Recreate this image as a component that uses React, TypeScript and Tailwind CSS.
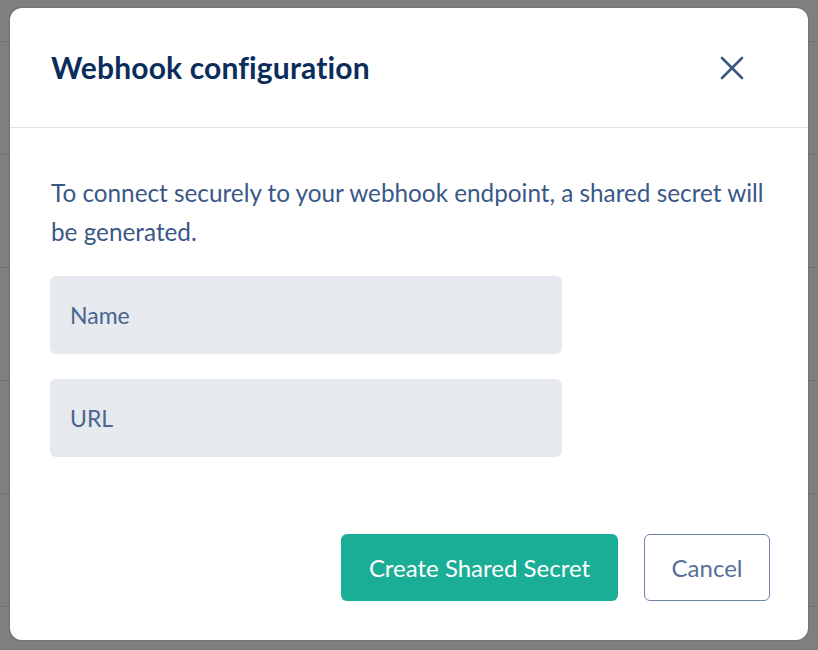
const rows = [42, 113, 113, 113, 113, 113]

export default function App() {
  return (
    <div
      className="relative w-[818px] h-[650px] overflow-hidden bg-[#7f7f7f]"
      style={{ fontFamily: '"Lato", "Open Sans", sans-serif' }}
    >
      {/* page behind the overlay */}
      <div className="flex flex-col">
        {rows.map((h, i) => (
          <div key={i} className="border-b border-[#707070]" style={{ height: h }} />
        ))}
      </div>

      <div className="absolute left-[10px] top-[8px] w-[798px] h-[632px] rounded-[12px] bg-white shadow-[0_0_2px_rgba(0,0,0,0.35)] flex flex-col">
        <div className="h-[120px] flex items-center justify-between pl-[41px] pr-[64px] border-b border-[#e3e3e3]">
          <h2 className="text-[30px] font-bold text-[#0b2d5c] tracking-[0.15px]">Webhook configuration</h2>
          <button className="text-[#3a5a86]">
            <svg width="24" height="24" viewBox="0 0 24 24" fill="none" stroke="currentColor" strokeWidth="2.6" strokeLinecap="round">
              <path d="M2 2L22 22M22 2L2 22" />
            </svg>
          </button>
        </div>

        <div className="flex-1 flex flex-col px-[40px] pt-[45px] pb-[39px]">
          <p className="text-[24.3px] leading-[39px] text-[#3a5887] pl-[1px]">
            To connect securely to your webhook endpoint, a shared secret will be generated.
          </p>

          <div className="mt-[25px] flex flex-col gap-[25px] w-[512px]">
            <input
              placeholder="Name"
              className="h-[78px] rounded-[6px] bg-[#e6e9ed] px-[20px] text-[23px] text-[#3a5887] placeholder:text-[#4a6590] outline-none"
            />
            <input
              placeholder="URL"
              className="h-[78px] rounded-[6px] bg-[#e6e9ed] px-[20px] text-[23px] text-[#3a5887] placeholder:text-[#4a6590] outline-none"
            />
          </div>

          <div className="mt-auto flex justify-end gap-[26px] mr-[-2px]">
            <button className="w-[277px] h-[67px] rounded-[6px] bg-[#1bae96] text-white text-[24px]">
              Create Shared Secret
            </button>
            <button className="w-[126px] h-[67px] rounded-[6px] border border-[#6d82a6] bg-white text-[#566f98] text-[24px]">
              Cancel
            </button>
          </div>
        </div>
      </div>
    </div>
  )
}
